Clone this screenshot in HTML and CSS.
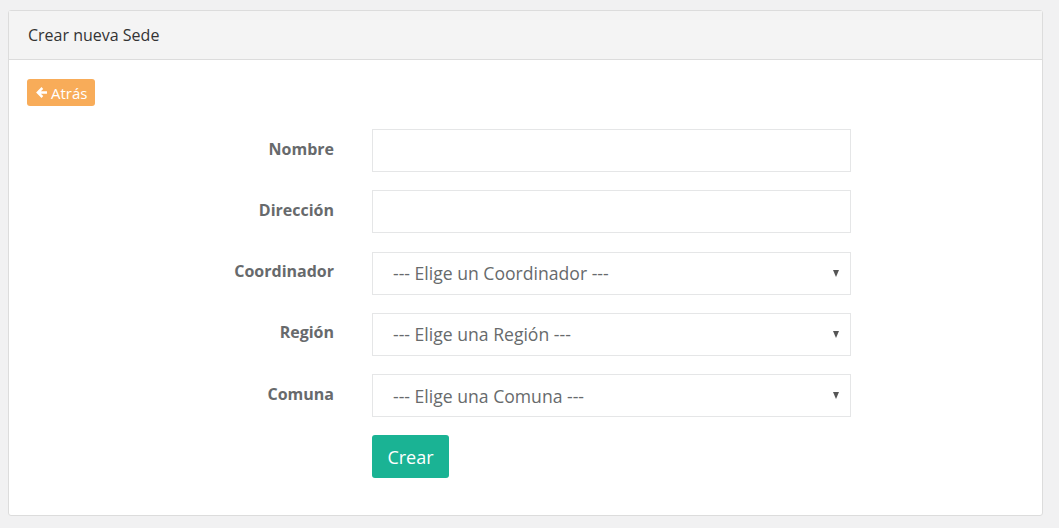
FILE: index.html
```html
<!DOCTYPE html>
<html lang="es">
<head>
<meta charset="utf-8">
<title>Crear nueva Sede</title>
<link rel="stylesheet" href="styles.css">
</head>
<body>
<div class="panel">
  <div class="panel-heading">Crear nueva Sede</div>
  <div class="panel-body">
    <a class="btn-back" href="#"><svg class="ico" viewBox="0 0 14 14" width="13" height="13"><path d="M7 1.2 L1.2 7 L7 12.8 L8.9 10.9 L6.3 8.4 H12.9 V5.6 H6.3 L8.9 3.1 Z" fill="#fff"/></svg>Atrás</a>
    <form class="form">
      <div class="row">
        <label class="lbl">Nombre</label>
        <input class="ctrl" type="text">
      </div>
      <div class="row">
        <label class="lbl">Dirección</label>
        <input class="ctrl" type="text">
      </div>
      <div class="row">
        <label class="lbl">Coordinador</label>
        <div class="ctrl sel"><span>--- Elige un Coordinador ---</span><span class="caret"></span></div>
      </div>
      <div class="row">
        <label class="lbl">Región</label>
        <div class="ctrl sel"><span>--- Elige una Región ---</span><span class="caret"></span></div>
      </div>
      <div class="row">
        <label class="lbl">Comuna</label>
        <div class="ctrl sel"><span>--- Elige una Comuna ---</span><span class="caret"></span></div>
      </div>
      <div class="row">
        <span class="lbl"></span>
        <button class="btn-create" type="button">Crear</button>
      </div>
    </form>
  </div>
</div>
</body>
</html>
```
FILE: styles.css
```css
html, body {
  margin: 0;
  padding: 0;
}
body {
  background: #f1f1f2;
  font-family: "Open Sans", "Liberation Sans", sans-serif;
  color: #676a6c;
  padding: 10px 16px 0 8px;
}
.panel {
  background: #fff;
  border: 1px solid #dcdcdc;
  border-radius: 3px;
  width: 1033px;
}
.panel-heading {
  background: #f4f4f4;
  border-bottom: 1px solid #dcdcdc;
  height: 48px;
  line-height: 48px;
  padding: 0 19px;
  font-size: 16px;
  color: #333;
}
.panel-body {
  padding: 19px 18px 37px 18px;
}
.btn-back {
  display: inline-flex;
  align-items: center;
  gap: 3px;
  height: 27px;
  padding: 0 0 0 8px;
  box-sizing: border-box;
  width: 68px;
  background: #f8ac59;
  color: #fff;
  border-radius: 3px;
  font-size: 15px;
  text-decoration: none;
}
.form {
  margin-top: 23px;
}
.row {
  display: flex;
  align-items: center;
  gap: 38px;
  margin-bottom: 18.25px;
}
.row:last-child {
  margin-bottom: 0;
}
.lbl {
  width: 307px;
  text-align: right;
  font-weight: 700;
  font-size: 16px;
  color: #676a6c;
  padding-bottom: 4px;
}
.ctrl {
  width: 479px;
  height: 43px;
  box-sizing: border-box;
  border: 1px solid #e5e6e7;
  background: #fff;
  font-family: inherit;
  font-size: 17.6px;
  color: #676a6c;
  padding: 0 20px;
  outline: none;
}
.sel {
  display: flex;
  align-items: center;
  justify-content: space-between;
  padding-right: 11px;
}
.caret {
  width: 0;
  height: 0;
  border-left: 3.5px solid transparent;
  border-right: 3.5px solid transparent;
  border-top: 7px solid #555;
}
.btn-create {
  width: 77px;
  height: 43px;
  background: #1ab394;
  color: #fff;
  border: none;
  border-radius: 3px;
  font-family: inherit;
  font-size: 18px;
  cursor: pointer;
}
```
